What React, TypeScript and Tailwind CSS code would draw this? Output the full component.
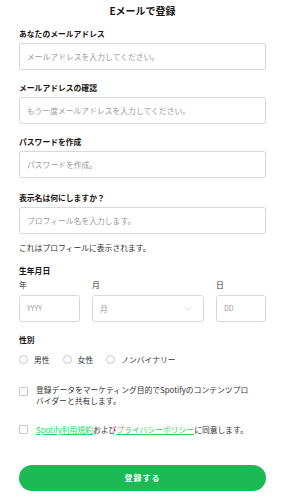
import { ChevronDown } from "lucide-react";

const font = { fontFamily: '"Noto Sans CJK JP", "Noto Sans", sans-serif' };

function Field({ label, placeholder, className }: { label: string; placeholder: string; className: string }) {
  return (
    <div className={className}>
      <div className="text-[7.8px] leading-[12px] font-bold text-[#191414]">{label}</div>
      <div className="mt-[3px] h-[27px] rounded-[3px] border border-[#d9d9d9] bg-white px-[7px] flex items-center shadow-[0_0_1px_rgba(0,0,0,0.08)]">
        <span className="text-[7.8px] text-[#9a9a9a]">{placeholder}</span>
      </div>
    </div>
  );
}

function Radio({ label }: { label: string }) {
  return (
    <div className="flex items-center gap-[6px]">
      <span className="w-[9px] h-[9px] rounded-full border border-[#c8c8c8] bg-white" />
      <span className="text-[7.8px] text-[#333]">{label}</span>
    </div>
  );
}

export default function App() {
  return (
    <div className="min-h-screen w-[284px] bg-white pl-[19px] pr-[18px] pb-4" style={font}>
      {/* Title */}
      <h1 className="pt-[4px] text-center text-[10px] leading-[14px] font-bold text-[#191414]">
        Eメールで登録
      </h1>

      <Field className="mt-[10px]" label="あなたのメールアドレス" placeholder="メールアドレスを入力してください。" />
      <Field className="mt-[12px]" label="メールアドレスの確認" placeholder="もう一度メールアドレスを入力してください。" />
      <Field className="mt-[12px]" label="パスワードを作成" placeholder="パスワードを作成。" />
      <Field className="mt-[14px]" label="表示名は何にしますか？" placeholder="プロフィール名を入力します。" />
      <div className="mt-[8px] text-[7.8px] leading-[12px] text-[#333]">これはプロフィールに表示されます。</div>

      {/* Birthday */}
      <div className="mt-[11px] text-[7.8px] leading-[12px] font-bold text-[#191414]">生年月日</div>
      <div className="mt-[2px] grid grid-cols-[61px_1fr_50px] gap-x-[12px]">
        <div className="text-[7.8px] leading-[12px] text-[#333]">年</div>
        <div className="text-[7.8px] leading-[12px] text-[#333]">月</div>
        <div className="text-[7.8px] leading-[12px] text-[#333]">日</div>
        <div className="mt-[4px] h-[27px] rounded-[3px] border border-[#d9d9d9] px-[7px] flex items-center">
          <span className="text-[7px] text-[#9a9a9a]">YYYY</span>
        </div>
        <div className="mt-[4px] h-[27px] rounded-[3px] border border-[#d9d9d9] px-[7px] flex items-center justify-between">
          <span className="text-[7.8px] text-[#9a9a9a]">月</span>
          <ChevronDown className="w-[8px] h-[8px] mr-[4px] text-[#b0b0b0]" strokeWidth={1.5} />
        </div>
        <div className="mt-[4px] h-[27px] rounded-[3px] border border-[#d9d9d9] px-[7px] flex items-center">
          <span className="text-[7px] text-[#9a9a9a]">DD</span>
        </div>
      </div>

      {/* Gender */}
      <div className="mt-[12px] text-[7.8px] leading-[12px] font-bold text-[#191414]">性別</div>
      <div className="mt-[8px] flex items-center gap-[13px]">
        <Radio label="男性" />
        <Radio label="女性" />
        <Radio label="ノンバイナリー" />
      </div>

      {/* Checkboxes */}
      <div className="mt-[18px] flex items-start gap-[8px]">
        <span className="mt-[3px] w-[9px] h-[9px] shrink-0 rounded-[1px] border border-[#c8c8c8]" />
        <p className="w-[216px] text-[7.8px] leading-[11px] text-[#333]">
          登録データをマーケティング目的でSpotifyのコンテンツプロバイダーと共有します。
        </p>
      </div>
      <div className="mt-[18px] flex items-start gap-[8px]">
        <span className="mt-[1px] w-[9px] h-[9px] shrink-0 rounded-[1px] border border-[#c8c8c8]" />
        <p className="text-[7.8px] leading-[11px] text-[#333]">
          <span className="text-[#1ed760] underline">Spotify利用規約</span>および
          <span className="text-[#1ed760] underline">プライバシーポリシー</span>に同意します。
        </p>
      </div>

      {/* Submit */}
      <button className="mt-[30px] w-full h-[26px] rounded-full bg-[#1db954] text-white text-[8px] font-bold tracking-[1px]">
        登録する
      </button>
    </div>
  );
}
